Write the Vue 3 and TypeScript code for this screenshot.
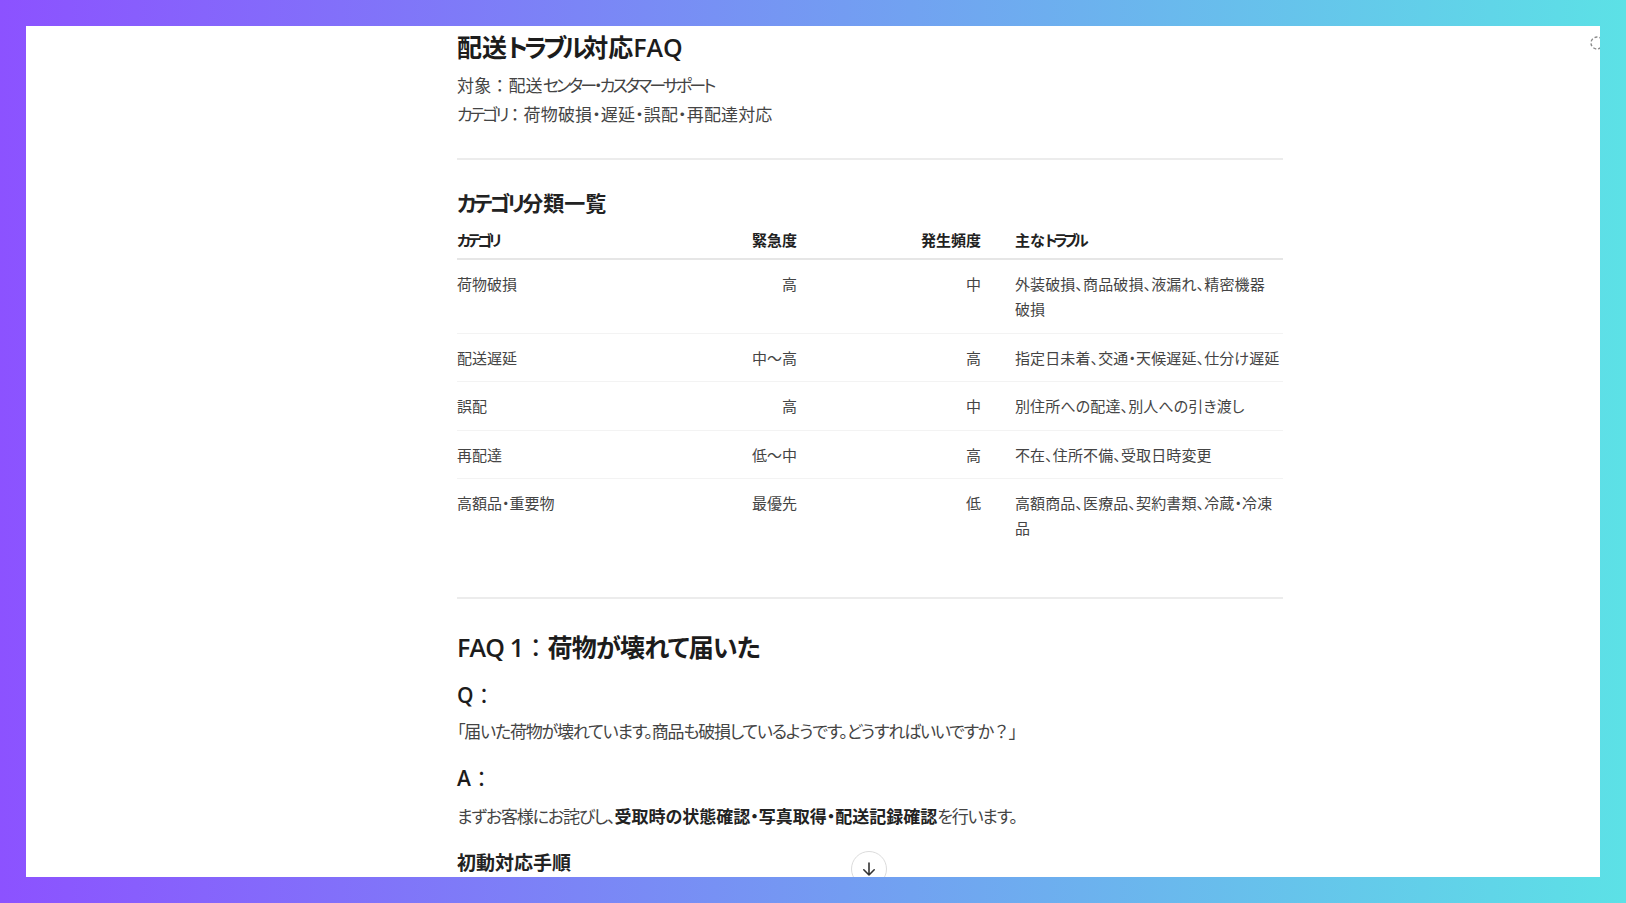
<script setup lang="ts">
type RowType = { category: string, urgency: string, frequency: string, trouble: string }

const rows: RowType[] = [
  { category: '荷物破損', urgency: '高', frequency: '中', trouble: '外装破損、商品破損、液漏れ、精密機器破\u2060損' },
  { category: '配送遅延', urgency: '中〜高', frequency: '高', trouble: '指定日未着、交通・天候遅延、仕分け遅延' },
  { category: '誤配', urgency: '高', frequency: '中', trouble: '別住所への配達、別人への引き渡し' },
  { category: '再配達', urgency: '低〜中', frequency: '高', trouble: '不在、住所不備、受取日時変更' },
  { category: '高額品・重要物', urgency: '最優先', frequency: '低', trouble: '高額商品、医療品、契約書類、冷蔵・冷凍品' },
]
</script>

<template>
  <div class="frame">
    <div class="screen">
      <article class="doc">
        <h1>配送<span class="kana">トラブル</span>対応FAQ</h1>
        <p class="meta">
          対象<span class="colon">：</span>配送<span class="kana">センター・カスタマーサポート</span><br>
          <span class="kana">カテゴリ</span><span class="colon">：</span>荷物破損・遅延・誤配・再配達対応
        </p>
        <hr class="rule-top">

        <h3 class="table-title"><span class="kana">カテゴリ</span>分類一覧</h3>
        <table>
          <thead>
            <tr>
              <th><span class="kana">カテゴリ</span></th>
              <th class="right">緊急度</th>
              <th class="right">発生頻度</th>
              <th>主な<span class="kana">トラブル</span></th>
            </tr>
          </thead>
          <tbody>
            <tr v-for="row in rows" v-bind:key="row.category">
              <td>{{ row.category }}</td>
              <td class="right">{{ row.urgency }}</td>
              <td class="right">{{ row.frequency }}</td>
              <td class="trouble">{{ row.trouble }}</td>
            </tr>
          </tbody>
        </table>
        <hr class="rule-mid">

        <h2>FAQ 1<span class="colon">：</span>荷物が壊れて届いた</h2>
        <h4 class="qa">Q<span class="colon">：</span></h4>
        <p class="quote">「届いた荷物が壊れています。商品も破損しているようです。どうすればいいですか<span class="colon">？</span>」</p>
        <h4 class="qa qa-answer">A<span class="colon">：</span></h4>
        <p class="answer">まずお客様にお詫びし、<strong>受取時の状態確認・写真取得・配送記録確認</strong>を行います。</p>
        <h5>初動対応手順</h5>
      </article>

      <!-- 右上のローディング -->
      <svg class="spinner" width="16" height="16" viewBox="0 0 16 16">
        <circle cx="8" cy="8" r="6" fill="none" stroke="#8a8a8a" stroke-width="1.4" stroke-dasharray="3 2" />
      </svg>

      <!-- 下へスクロール -->
      <button class="scroll-down" type="button">
        <svg width="18" height="18" viewBox="0 0 18 18">
          <path d="M9 3v12M3.8 9.8 9 15l5.2-5.2" fill="none" stroke="#333" stroke-width="1.6" stroke-linecap="round" stroke-linejoin="round" />
        </svg>
      </button>
    </div>
  </div>
</template>

<style>
html, body {
  margin: 0;
  background: #fff;
}
</style>

<style scoped>
.frame {
  box-sizing: border-box;
  width: 1626px;
  height: 903px;
  padding: 26px;
  background: linear-gradient(90deg, #8c52ff, #5ce1e6);
}

.screen {
  position: relative;
  height: 100%;
  overflow: hidden;
  background: #fff;
  display: grid;
  grid-template-columns: 431px 826px 1fr;
  font-family: "Open Sans", "Noto Sans CJK JP", sans-serif;
  font-feature-settings: "palt";
  color: #333;
}

.doc {
  grid-column: 2;
}

/* Meiryo UI 風に詰める */
.kana {
  letter-spacing: -0.15em;
}

.colon {
  font-feature-settings: normal;
  font-weight: 400;
}

h1, h2, h3, h4, h5, p {
  margin: 0;
}

h1 {
  margin-top: 3px;
  font-size: 25px;
  line-height: 36px;
  font-weight: 600;
  color: #1c1c1c;
}

.meta {
  margin-top: 6px;
  font-size: 17px;
  line-height: 29px;
  letter-spacing: 0.15px;
  color: #444;
}

.meta .kana {
  letter-spacing: -0.17em;
}

hr {
  margin: 0;
  border: 0;
  border-top: 2px solid #ececec;
}

.rule-top {
  margin-top: 29px;
}

.table-title {
  margin-top: 28px;
  font-size: 21px;
  line-height: 30px;
  font-weight: 600;
  color: #222;
}

table {
  width: 100%;
  margin-top: 6px;
  border-collapse: collapse;
  table-layout: fixed;
  font-size: 15px;
  line-height: 25px;
}

th:nth-child(1) { width: 263px; }
th:nth-child(2) { width: 94px; }
th:nth-child(3) { width: 184px; }

th, td {
  box-sizing: border-box;
}

th {
  padding: 4px 17px 5px;
  text-align: left;
  font-weight: 600;
  color: #222;
  border-bottom: 2px solid #e6e6e6;
}

th .kana {
  letter-spacing: -0.24em;
}

td {
  padding: 12px 17px 10.5px;
  vertical-align: top;
  color: #444;
  border-bottom: 1px solid #f3f3f3;
}

th:first-child, td:first-child {
  padding-left: 0;
}

th:last-child, td:last-child {
  padding-right: 0;
}

tbody tr:last-child td {
  border-bottom: 0;
}

.right {
  text-align: right;
  white-space: nowrap;
}

.trouble {
  letter-spacing: 0.12px;
}

.rule-mid {
  margin-top: 45px;
}

h2 {
  margin-top: 28px;
  font-size: 25px;
  line-height: 40px;
  font-weight: 600;
  letter-spacing: -0.8px;
  color: #1c1c1c;
}

.qa {
  margin-top: 14px;
  font-size: 21px;
  line-height: 28px;
  font-weight: 600;
  color: #1c1c1c;
}

.qa-answer {
  margin-top: 18px;
}

.quote {
  margin-top: 8px;
  font-size: 17px;
  line-height: 29px;
  letter-spacing: -1.2px;
  color: #444;
}

.answer {
  margin-top: 10px;
  font-size: 17px;
  line-height: 29px;
  letter-spacing: -1.2px;
  color: #444;
}

.answer strong {
  font-weight: 600;
  letter-spacing: 0;
  color: #222;
}

h5 {
  margin-top: 18px;
  font-size: 19px;
  line-height: 28px;
  font-weight: 600;
  color: #222;
}

.spinner {
  position: absolute;
  top: 9px;
  right: -5px;
}

.scroll-down {
  position: absolute;
  left: 825px;
  bottom: -10px;
  box-sizing: border-box;
  width: 36px;
  height: 36px;
  padding: 0;
  display: flex;
  align-items: center;
  justify-content: center;
  border: 1px solid #dcdcdc;
  border-radius: 50%;
  background: #fff;
}
</style>
